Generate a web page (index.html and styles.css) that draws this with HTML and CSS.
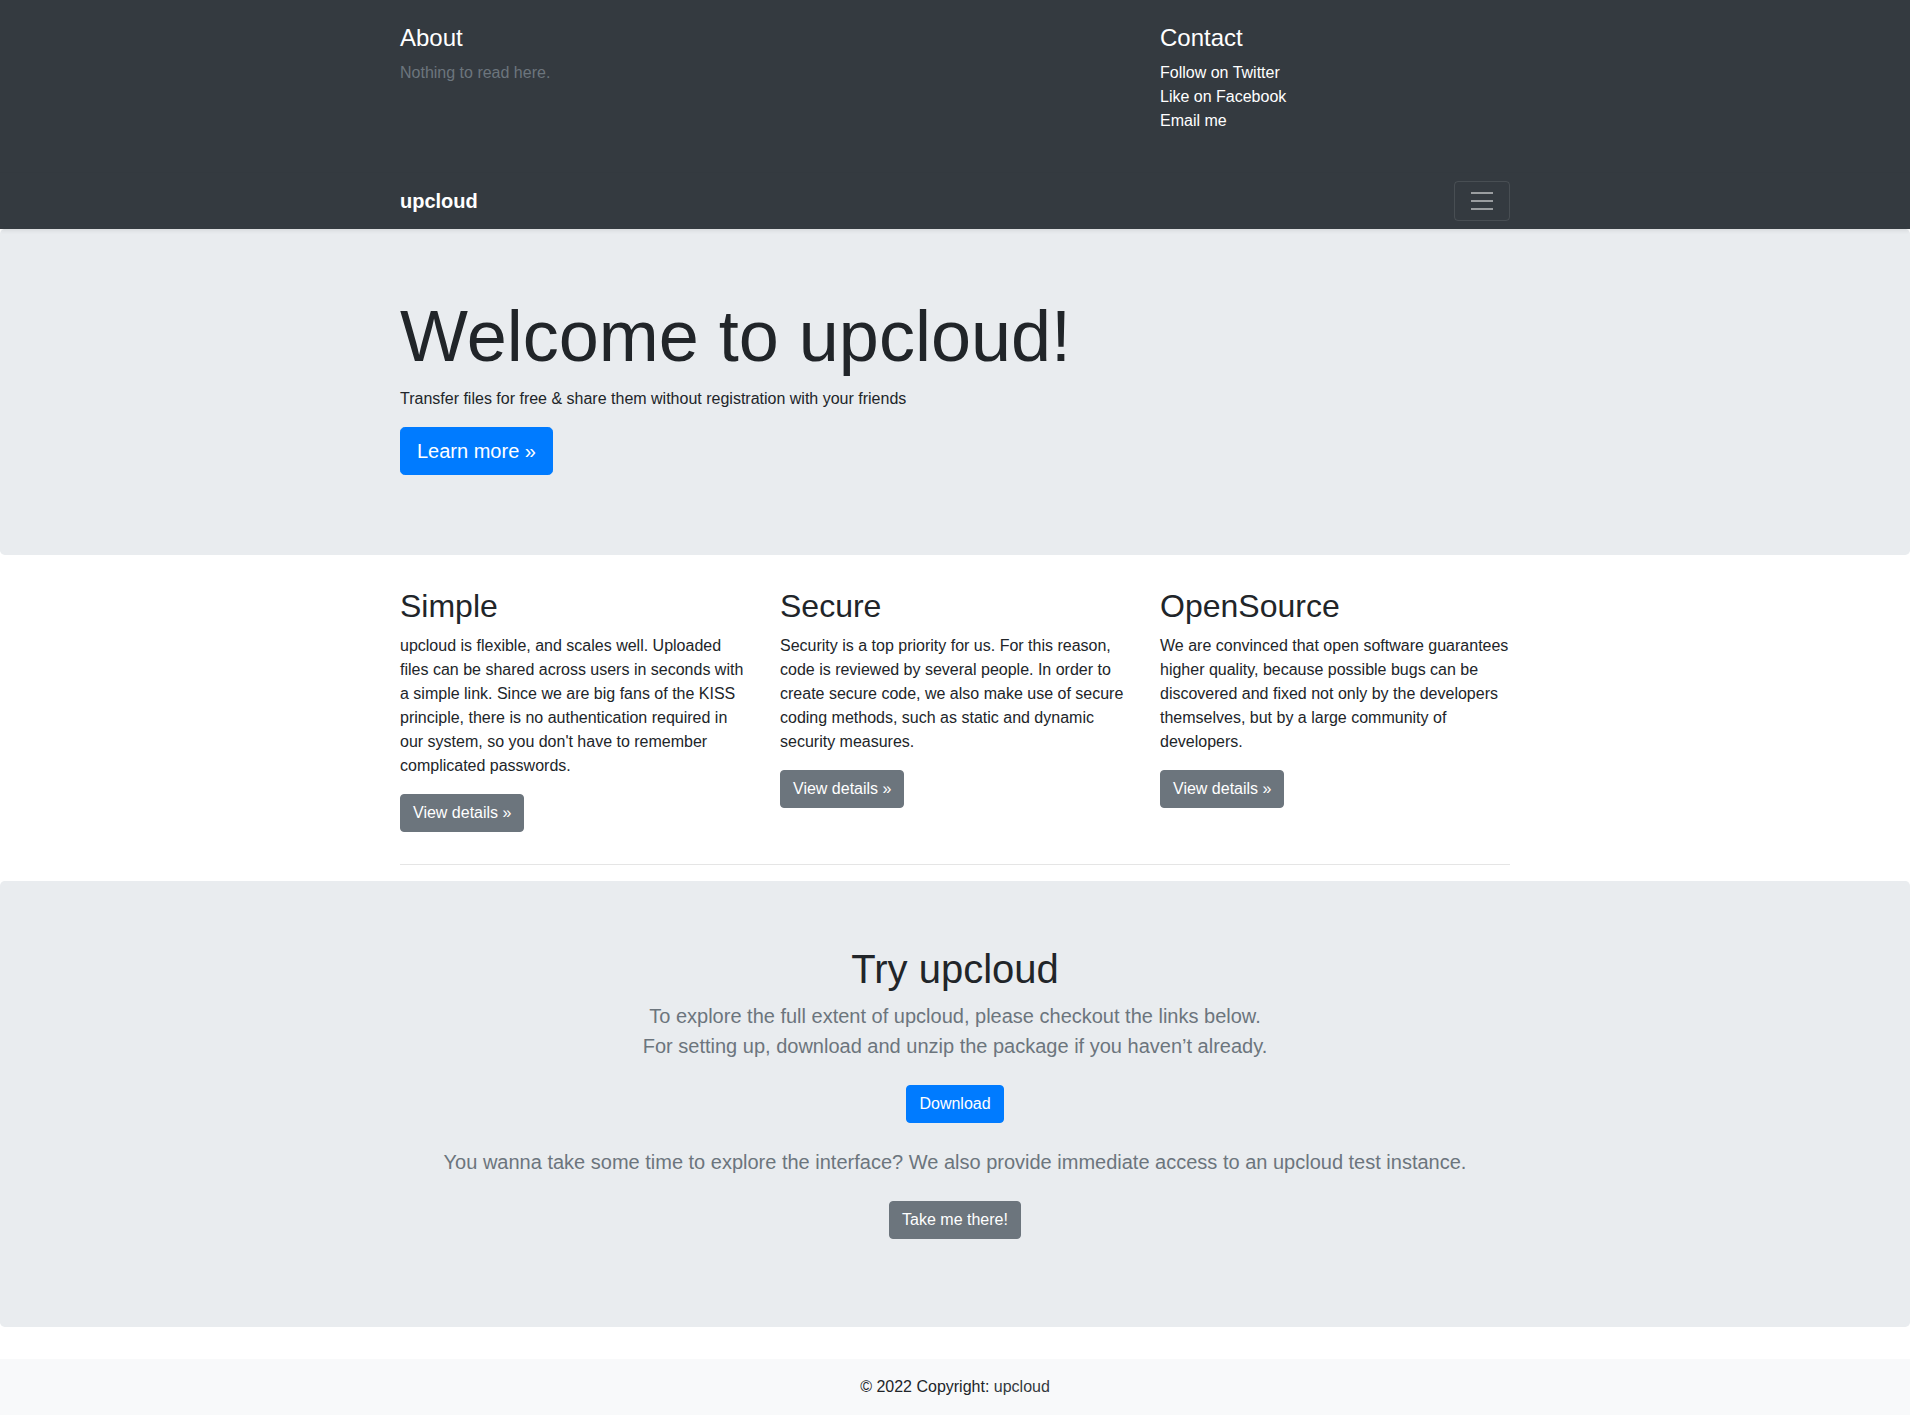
FILE: index.html
```html
<!DOCTYPE html>
<html lang="en">
<head>
<meta charset="utf-8">
<title>upcloud</title>
<link rel="stylesheet" href="styles.css">
</head>
<body>
<header>
  <div class="header-panel">
    <div class="container">
      <div class="row">
        <div class="col-about">
          <h4 class="h4-white">About</h4>
          <p class="muted-dark">Nothing to read here.</p>
        </div>
        <div class="col-contact">
          <h4 class="h4-white">Contact</h4>
          <ul class="contact-list">
            <li><a href="#">Follow on Twitter</a></li>
            <li><a href="#">Like on Facebook</a></li>
            <li><a href="#">Email me</a></li>
          </ul>
        </div>
      </div>
    </div>
  </div>
  <div class="navbar">
    <div class="container nav-inner">
      <a href="#" class="brand"><strong>upcloud</strong></a>
      <button class="toggler" type="button" aria-label="Toggle navigation">
        <svg width="30" height="30" viewBox="0 0 30 30"><path d="M4 7h22M4 15h22M4 23h22" stroke="rgba(255,255,255,0.5)" stroke-width="2" stroke-linecap="butt" stroke-miterlimit="10"/></svg>
      </button>
    </div>
  </div>
</header>

<main>
  <div class="jumbotron">
    <div class="container">
      <h1 class="display">Welcome to upcloud!</h1>
      <p>Transfer files for free &amp; share them without registration with your friends</p>
      <p><a class="btn btn-primary btn-lg" href="#">Learn more »</a></p>
    </div>
  </div>

  <div class="container">
    <div class="row">
      <div class="col-feature">
        <h2>Simple</h2>
        <p>upcloud is flexible, and scales well. Uploaded files can be shared across users in seconds with a simple link. Since we are big fans of the KISS principle, there is no authentication required in our system, so you don't have to remember complicated passwords.</p>
        <p><a class="btn btn-secondary" href="#">View details »</a></p>
      </div>
      <div class="col-feature">
        <h2>Secure</h2>
        <p>Security is a top priority for us. For this reason, code is reviewed by several people. In order to create secure code, we also make use of secure coding methods, such as static and dynamic security measures.</p>
        <p><a class="btn btn-secondary" href="#">View details »</a></p>
      </div>
      <div class="col-feature">
        <h2>OpenSource</h2>
        <p>We are convinced that open software guarantees higher quality, because possible bugs can be discovered and fixed not only by the developers themselves, but by a large community of developers.</p>
        <p><a class="btn btn-secondary" href="#">View details »</a></p>
      </div>
    </div>
    <hr>
  </div>

  <section class="jumbotron centered">
    <div class="container">
      <h1 class="try-title">Try upcloud</h1>
      <p class="lead">To explore the full extent of upcloud, please checkout the links below.<br>For setting up, download and unzip the package if you haven’t already.</p>
      <p><a class="btn btn-primary spaced" href="#">Download</a></p>
      <p class="lead">You wanna take some time to explore the interface? We also provide immediate access to an upcloud test instance.</p>
      <p><a class="btn btn-secondary spaced" href="#">Take me there!</a></p>
    </div>
  </section>
</main>

<footer class="footer">
  <div class="footer-text">© 2022 Copyright: <a href="#" class="footer-link">upcloud</a></div>
</footer>
</body>
</html>
```

FILE: styles.css
```css
*, *::before, *::after { box-sizing: border-box; }

html, body { margin: 0; padding: 0; }

body {
  font-family: "Liberation Sans", Arial, "Helvetica Neue", sans-serif;
  font-size: 16px;
  line-height: 1.5;
  color: #212529;
  background: #fff;
}

a { text-decoration: none; }

h1, h2, h4, p, ul { margin-top: 0; }

.container {
  width: 100%;
  max-width: 1140px;
  margin: 0 auto;
  padding: 0 15px;
}

.row {
  display: flex;
  flex-wrap: wrap;
  margin: 0 -15px;
}

/* header */
.header-panel { background: #343a40; }

.col-about {
  flex: 0 0 58.333333%;
  max-width: 58.333333%;
  padding: 24px 15px;
}

.col-contact {
  flex: 0 0 33.333333%;
  max-width: 33.333333%;
  margin-left: 8.333333%;
  padding: 24px 15px;
}

.h4-white {
  color: #fff;
  font-size: 24px;
  font-weight: 500;
  line-height: 1.2;
  margin-bottom: 8px;
}

.muted-dark {
  color: #6c757d;
  margin-bottom: 16px;
}

.contact-list {
  list-style: none;
  padding: 0;
  margin-bottom: 16px;
}

.contact-list a { color: #fff; }

.navbar {
  background: #343a40;
  padding: 8px 16px;
  box-shadow: 0 2px 4px rgba(0,0,0,0.075);
  position: relative;
  z-index: 1;
}

.nav-inner {
  display: flex;
  align-items: center;
  justify-content: space-between;
  padding: 0;
  max-width: 1110px;
}

.brand {
  color: #fff;
  font-size: 20px;
  line-height: 1.5;
  padding: 5px 0;
  display: inline-block;
}

.toggler {
  background: transparent;
  border: 1px solid rgba(255,255,255,0.1);
  border-radius: 4px;
  padding: 4px 12px;
  line-height: 1;
  font-size: 20px;
  display: flex;
  align-items: center;
  justify-content: center;
  cursor: pointer;
}

.toggler svg { display: block; width: 30px; height: 30px; }

/* jumbotron */
.jumbotron {
  background: #e9ecef;
  padding: 64px 32px;
  margin-bottom: 32px;
  border-radius: 4.8px;
}

.jumbotron > .container { padding: 0 15px; }
.jumbotron { padding-left: 0; padding-right: 0; }

.display {
  font-size: 72px;
  font-weight: 300;
  line-height: 1.2;
  margin-bottom: 8px;
}

.jumbotron p { margin-bottom: 16px; }

.btn {
  display: inline-block;
  font-size: 16px;
  line-height: 1.5;
  padding: 6px 12px;
  border: 1px solid transparent;
  border-radius: 4px;
  color: #fff;
  text-align: center;
  vertical-align: middle;
}

.btn-lg {
  font-size: 20px;
  padding: 8px 16px;
  border-radius: 4.8px;
}

.btn-primary { background: #007bff; border-color: #007bff; }
.btn-secondary { background: #6c757d; border-color: #6c757d; }

.spaced { margin: 8px 0; }

/* features */
.col-feature {
  flex: 0 0 33.333333%;
  max-width: 33.333333%;
  padding: 0 15px;
}

.col-feature h2 {
  font-size: 32px;
  font-weight: 500;
  line-height: 1.2;
  margin-bottom: 8px;
}

.col-feature p { margin-bottom: 16px; }

hr {
  margin: 16px 0;
  border: 0;
  border-top: 1px solid rgba(0,0,0,0.1);
  height: 0;
}

/* try section */
.centered { text-align: center; }

.try-title {
  font-size: 40px;
  font-weight: 300;
  line-height: 1.2;
  margin-bottom: 8px;
}

.lead {
  font-size: 20px;
  font-weight: 300;
  color: #6c757d;
}

/* footer */
.footer {
  background: #f8f9fa;
  text-align: center;
}

.footer-text { padding: 16px; }

.footer-link { color: #343a40; }
```
